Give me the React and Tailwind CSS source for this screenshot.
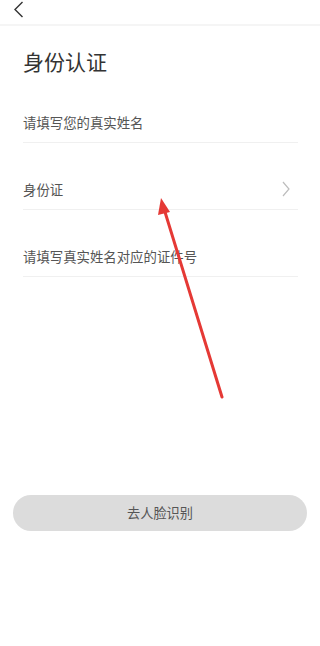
import React from "react";

const font = { fontFamily: '"Noto Sans CJK SC", "Noto Sans", sans-serif' };

function Row({ text, chevron }) {
  return (
    <div className="flex items-end justify-between h-[67px] border-b border-[#f0f0f0] pb-[12px]">
      <span className="text-[13.4px] leading-[16px] text-[#555]">{text}</span>
      {chevron && (
        <svg width="8" height="16" viewBox="0 0 8 16" className="mr-[8px]">
          <path d="M1 1 L7 8 L1 15" fill="none" stroke="#bdbdbd" strokeWidth="1.2" />
        </svg>
      )}
    </div>
  );
}

export default function App() {
  return (
    <div className="relative w-[320px] h-[646px] bg-white overflow-hidden" style={font}>
      <div className="h-[26px] border-b-2 border-[#f5f5f5] flex items-start pl-[13px] pt-[1px]">
        <svg width="12" height="17" viewBox="0 0 12 17">
          <path d="M9.5 1 L2 8.5 L9.5 16" fill="none" stroke="#333" strokeWidth="1.4" />
        </svg>
      </div>
      <div className="px-[23px] pr-[22px]">
        <div className="h-[50px] flex items-start pt-[25px]">
          <span className="text-[21px] text-[#333] leading-[21px]">身份认证</span>
        </div>
        <Row text="请填写您的真实姓名" />
        <Row text="身份证" chevron />
        <Row text="请填写真实姓名对应的证件号" />
      </div>
      <div className="px-[13px] mt-[218px]">
        <div className="h-[36px] rounded-full bg-[#dcdcdc] flex items-center justify-center">
          <span className="text-[13.2px] text-[#555]">去人脸识别</span>
        </div>
      </div>
      <svg className="absolute left-0 top-0 pointer-events-none" width="320" height="646">
        <line x1="222" y1="397" x2="165" y2="212" stroke="#e53935" strokeWidth="3" strokeLinecap="round" />
        <polygon points="161,198 158,215 170,212" fill="#e53935" />
      </svg>
    </div>
  );
}
